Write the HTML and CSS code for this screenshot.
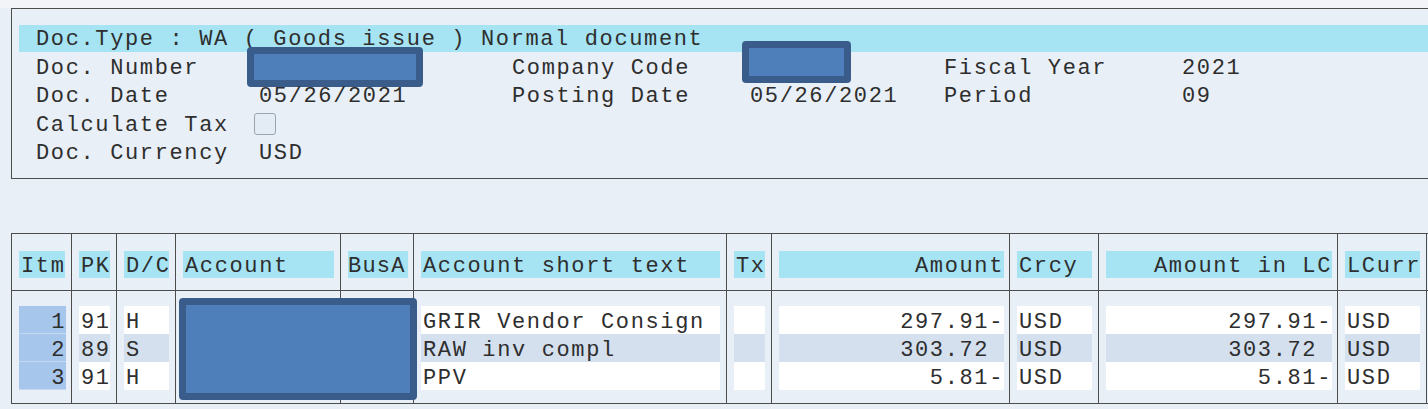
FILE: index.html
```html
<!DOCTYPE html>
<html lang="en">
<head>
  <meta charset="UTF-8" />
  <title>Display Document: Data Entry View</title>
  <link rel="stylesheet" href="styles.css">
</head>
<body>

  <div class="strip"></div>

  <section class="doc-head">
    <div class="type-bar">Doc.Type : WA ( Goods issue ) Normal document</div>
    <div class="fields">
      <span>Doc. Number</span>
      <span class="val"><span class="redact r-docno"></span></span>
      <span>Company Code</span>
      <span class="val"><span class="redact r-ccode"></span></span>
      <span>Fiscal Year</span>
      <span class="val">2021</span>

      <span>Doc. Date</span>
      <span class="val">05/26/2021</span>
      <span>Posting Date</span>
      <span class="val">05/26/2021</span>
      <span>Period</span>
      <span class="val">09</span>

      <span>Calculate Tax</span>
      <span class="val"><span class="checkbox"></span></span>
      <span></span><span></span><span></span><span></span>

      <span>Doc. Currency</span>
      <span class="val">USD</span>
      <span></span><span></span><span></span><span></span>
    </div>
  </section>

  <div class="items">
    <div class="hd"><span class="cap">Itm</span></div>
    <div class="hd"><span class="cap">PK</span></div>
    <div class="hd"><span class="cap">D/C</span></div>
    <div class="hd"><span class="cap">Account</span></div>
    <div class="hd narrow"><span class="cap tight">BusA</span></div>
    <div class="hd"><span class="cap">Account short text</span></div>
    <div class="hd"><span class="cap">Tx</span></div>
    <div class="hd"><span class="cap num">Amount</span></div>
    <div class="hd"><span class="cap">Crcy</span></div>
    <div class="hd"><span class="cap num">Amount in LC</span></div>
    <div class="hd"><span class="cap">LCurr</span></div>
    <div class="hd"></div>

    <div class="col itm">
      <span class="c num">1</span><span class="c num">2</span><span class="c num">3</span>
    </div>
    <div class="col">
      <span class="c">91</span><span class="c">89</span><span class="c">91</span>
    </div>
    <div class="col">
      <span class="c">H</span><span class="c">S</span><span class="c">H</span>
    </div>
    <div class="col">
      <span class="c"></span><span class="c"></span><span class="c"></span>
    </div>
    <div class="col narrow">
      <span class="c"></span><span class="c"></span><span class="c"></span>
    </div>
    <div class="col">
      <span class="c">GRIR Vendor Consign</span><span class="c">RAW inv compl</span><span class="c">PPV</span>
    </div>
    <div class="col">
      <span class="c"></span><span class="c"></span><span class="c"></span>
    </div>
    <div class="col">
      <span class="c num">297.91-</span><span class="c num">303.72 </span><span class="c num">5.81-</span>
    </div>
    <div class="col">
      <span class="c">USD</span><span class="c">USD</span><span class="c">USD</span>
    </div>
    <div class="col">
      <span class="c num">297.91-</span><span class="c num">303.72 </span><span class="c num">5.81-</span>
    </div>
    <div class="col">
      <span class="c">USD</span><span class="c">USD</span><span class="c">USD</span>
    </div>
    <div class="col"></div>

    <span class="redact r-account"></span>
  </div>

</body>
</html>
```

FILE: styles.css
```css
html, body {
  margin: 0;
  overflow: hidden;
}
body {
  background: #e9eff6;
  color: #2e2e2e;
  font-family: "Liberation Mono", "Courier New", monospace;
  font-size: 22px;
  letter-spacing: 1.63px;
}
.strip {
  height: 8px;
  background: #f2f4f7;
}
.doc-head {
  margin-left: 11px;
  margin-right: -20px;
  height: 169px;
  border: 1px solid #4d4d4d;
  box-sizing: content-box;
}
.type-bar {
  margin: 16px 0 0 7px;
  height: 27px;
  line-height: 29px;
  padding-left: 17px;
  background: #a6e4f4;
  white-space: pre;
}
.fields {
  display: grid;
  grid-template-columns: 223px 253px 238px 194px 238px auto;
  grid-auto-rows: 28.5px;
  align-items: center;
  padding: 2px 0 0 24px;
  white-space: pre;
}
.val {
  position: relative;
}
.checkbox {
  display: block;
  width: 20px;
  height: 20px;
  margin: -3px 0 0 -5px;
  border: 1px solid #9aa4af;
  border-radius: 3px;
  background: #e3ebf4;
}
.redact {
  position: absolute;
  box-sizing: border-box;
  border: 7px solid #3a5c8b;
  border-radius: 4px;
  background: #4e7fba;
}
.r-docno {
  left: -12px;
  top: -21px;
  width: 176px;
  height: 40px;
}
.r-ccode {
  left: -8px;
  top: -27px;
  width: 109px;
  height: 42px;
}
.items {
  position: relative;
  display: grid;
  grid-template-columns: 60px 45px 59px 165px 73px 313px 45px 238px 89px 239px 89px 40px;
  margin: 54px 0 0 11px;
  border-top: 1px solid #4d4d4d;
  border-bottom: 1px solid #4d4d4d;
}
.hd, .col {
  border-left: 1px solid #4d4d4d;
  padding: 0 6px 0 7px;
}
.hd.narrow, .col.narrow {
  padding-right: 5px;
}
.hd {
  height: 57px;
  padding-top: 17px;
  box-sizing: border-box;
  border-bottom: 1px solid #4d4d4d;
}
.cap {
  display: block;
  height: 25px;
  line-height: 27px;
  padding: 2px 0 0 2px;
  background: #a6e4f4;
  white-space: pre;
}
.cap.tight {
  padding-left: 0;
  letter-spacing: 1.2px;
}
.col {
  display: flex;
  flex-direction: column;
  padding-top: 15px;
  padding-bottom: 13px;
}
.c {
  display: block;
  height: 28px;
  line-height: 33px;
  overflow: hidden;
  padding-left: 2px;
  background: #fff;
  white-space: pre;
}
.c:nth-child(2) {
  background: #d5e0ef;
}
.num {
  text-align: right;
  padding-right: 0;
  margin-right: -1px;
}
.itm .c {
  background: #a7c6eb;
  border-bottom: 1px solid #c6d8ef;
  height: 27px;
}
.r-account {
  left: 168px;
  top: 64px;
  width: 238px;
  height: 102px;
}
```
